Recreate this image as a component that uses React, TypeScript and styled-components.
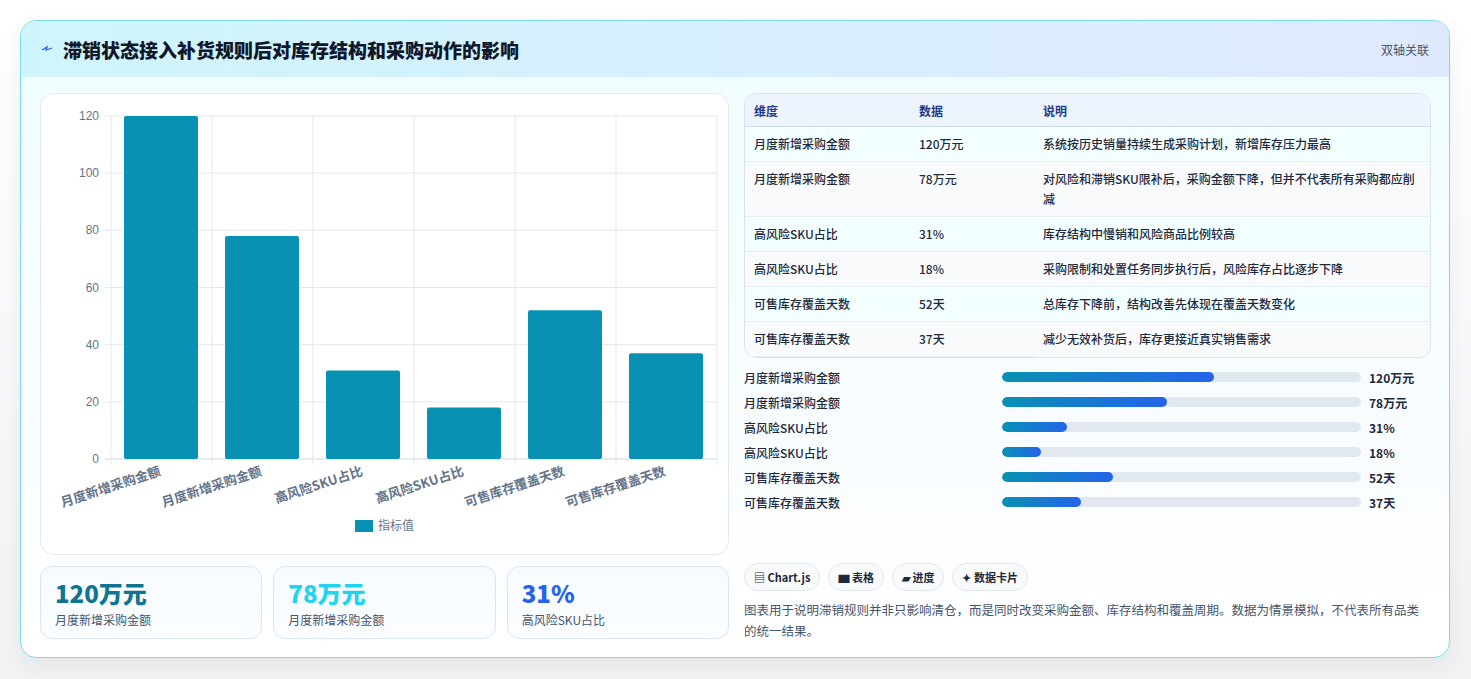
import React from "react";
import styled, { createGlobalStyle } from "styled-components";

const G = createGlobalStyle`
  body { margin:0; background:#f3f4f6; font-family: "Noto Sans CJK SC","Noto Sans",sans-serif; }
`;
const Page = styled.div`padding:20px 21px 21px 20px; background:linear-gradient(#fff,#f1f2f4);`;
const Card = styled.div`border:1px solid #7dd9ec; border-radius:16px; overflow:hidden; background:linear-gradient(180deg,#effdff,#f8fcff 60%,#fff); box-shadow:0 8px 24px rgba(0,0,0,.06); height:638px; box-sizing:border-box;`;
const Header = styled.div`height:56px; display:flex; align-items:center; justify-content:space-between; padding:0 20px; background:linear-gradient(90deg,#cff5fc,#dfe9fd); box-sizing:border-box;`;
const Title = styled.h1`margin:0; font-size:19px; font-weight:800; color:#0f172a; display:flex; align-items:center; gap:10px;`;
const Tag = styled.span`font-size:12px; color:#475569;`;
const Body = styled.div`display:grid; grid-template-columns:689px 1fr; gap:15px; padding:16px 18px 0 19px;`;
const Col = styled.div`display:flex; flex-direction:column;`;
const ChartBox = styled.div`height:462px; background:#fff; border:1px solid #e2e8f0; border-radius:14px; box-sizing:border-box;`;
const Kpis = styled.div`display:grid; grid-template-columns:repeat(3,1fr); gap:11px; margin-top:11px;`;
const Kpi = styled.div`height:73px; border:1px solid #dbe5f1; border-radius:12px; background:linear-gradient(#f6fbff,#fbfdff); padding:12px 14px; box-sizing:border-box;`;
const KV = styled.div<{c:string}>`font-size:24px; font-weight:800; color:${p=>p.c}; line-height:28px;`;
const KL = styled.div`font-size:12px; color:#475569; margin-top:4px;`;
const Table = styled.table`width:100%; border-collapse:separate; border-spacing:0; border:1px solid #dbe3ee; border-radius:12px; overflow:hidden; font-size:12px; font-weight:500; color:#1e293b; background:#fff;`;
const Th = styled.th`text-align:left; font-weight:700; color:#1e3a8a; background:#eef4fe; padding:0 9px; border-bottom:1px solid #cfdcec; height:32px;`;
const Td = styled.td<{alt?:boolean}>`padding:7px 9px; vertical-align:top; line-height:20px; background:${p=>p.alt?"#f8fafc":"#f2feff"}; border-bottom:1px solid #e5edf5;`;
const Bars = styled.div`display:flex; flex-direction:column; gap:7px; margin-top:10px;`;
const BarRow = styled.div`display:grid; grid-template-columns:258px 359px 1fr; align-items:center; font-size:12px; font-weight:500; color:#1e293b; height:18px;`;
const Track = styled.div`height:10px; border-radius:5px; background:#e2e8f0; overflow:hidden;`;
const Fill = styled.div`height:100%; border-radius:5px; background:linear-gradient(90deg,#0891b2,#2563eb);`;
const BV = styled.span`font-weight:700; padding-left:8px;`;
const Chips = styled.div`display:flex; gap:8px; margin-top:52px;`;
const Chip = styled.span`font-size:11px; font-weight:600; color:#1e293b; border:1px solid #e2e8f0; border-radius:14px; background:#f8fafc; padding:5px 9px;`;
const Note = styled.p`font-size:12.5px; color:#475569; line-height:21px; margin:8px 0 0;`;

const labels = ["月度新增采购金额","月度新增采购金额","高风险SKU占比","高风险SKU占比","可售库存覆盖天数","可售库存覆盖天数"];
const vals = [120,78,31,18,52,37];
const units = ["120万元","78万元","31%","18%","52天","37天"];
const widths = [59,46,18,11,31,22];
const notes = ["系统按历史销量持续生成采购计划，新增库存压力最高","对风险和滞销SKU限补后，采购金额下降，但并不代表所有采购都应削减","库存结构中慢销和风险商品比例较高","采购限制和处置任务同步执行后，风险库存占比逐步下降","总库存下降前，结构改善先体现在覆盖天数变化","减少无效补货后，库存更接近真实销售需求"];

function Chart(){
  const x0=70,x1=676,y0=22,y1=365; const step=(x1-x0)/6;
  const y=(v:number)=>y1-(v/120)*(y1-y0);
  return <svg width="687" height="460" style={{display:"block"}}>
    {[0,20,40,60,80,100,120].map(v=><g key={v}>
      <line x1={x0-6} x2={x1} y1={y(v)} y2={y(v)} stroke={v===0?"#cbd5e1":"#e5e7eb"}/>
      <text x={x0-12} y={y(v)+4} textAnchor="end" fontSize="12" fill="#64748b" fontFamily="Liberation Sans">{v}</text>
    </g>)}
    {[0,1,2,3,4,5,6].map(i=><line key={i} x1={x0+i*step} x2={x0+i*step} y1={y0} y2={y1+6} stroke="#e5e7eb"/>)}
    {vals.map((v,i)=><rect key={i} x={x0+i*step+13} y={y(v)} width={step-27} height={y1-y(v)} rx="2" fill="#0891b2"/>)}
    {labels.map((l,i)=><text key={i} transform={`translate(${x0+i*step+step/2},${y1+16}) rotate(-18)`} textAnchor="end" fontSize="13" fontWeight="600" fill="#64748b" fontFamily="Noto Sans CJK SC">{l}</text>)}
    <rect x="314" y="426" width="18" height="12" fill="#0891b2"/>
    <text x="337" y="436" fontSize="12" fill="#64748b" fontFamily="Noto Sans CJK SC">指标值</text>
  </svg>;
}

export default function App(){
  return <Page><G/><Card>
    <Header><Title><svg width="12" height="10" viewBox="0 0 12 10"><path d="M1 6 L6 3 L5 6 L11 4" stroke="#2563eb" strokeWidth="1.3" fill="none"/></svg>滞销状态接入补货规则后对库存结构和采购动作的影响</Title><Tag>双轴关联</Tag></Header>
    <Body>
      <Col>
        <ChartBox><Chart/></ChartBox>
        <Kpis>
          <Kpi><KV c="#0e7490">120万元</KV><KL>月度新增采购金额</KL></Kpi>
          <Kpi><KV c="#22d3ee">78万元</KV><KL>月度新增采购金额</KL></Kpi>
          <Kpi><KV c="#2563eb">31%</KV><KL>高风险SKU占比</KL></Kpi>
        </Kpis>
      </Col>
      <Col>
        <Table><thead><tr><Th style={{width:147}}>维度</Th><Th style={{width:106}}>数据</Th><Th>说明</Th></tr></thead>
          <tbody>{labels.map((l,i)=><tr key={i}><Td alt={i%2===1}>{l}</Td><Td alt={i%2===1}>{units[i]}</Td><Td alt={i%2===1} style={i===5?{borderBottom:"none"}:undefined}>{notes[i]}</Td></tr>)}</tbody>
        </Table>
        <Bars>{labels.map((l,i)=><BarRow key={i}><span>{l}</span><Track><Fill style={{width:widths[i]+"%"}}/></Track><BV>{units[i]}</BV></BarRow>)}</Bars>
        <Chips><Chip>▤ Chart.js</Chip><Chip>▆ 表格</Chip><Chip>▰ 进度</Chip><Chip>✦ 数据卡片</Chip></Chips>
        <Note>图表用于说明滞销规则并非只影响清仓，而是同时改变采购金额、库存结构和覆盖周期。数据为情景模拟，不代表所有品类的统一结果。</Note>
      </Col>
    </Body>
  </Card></Page>;
}
